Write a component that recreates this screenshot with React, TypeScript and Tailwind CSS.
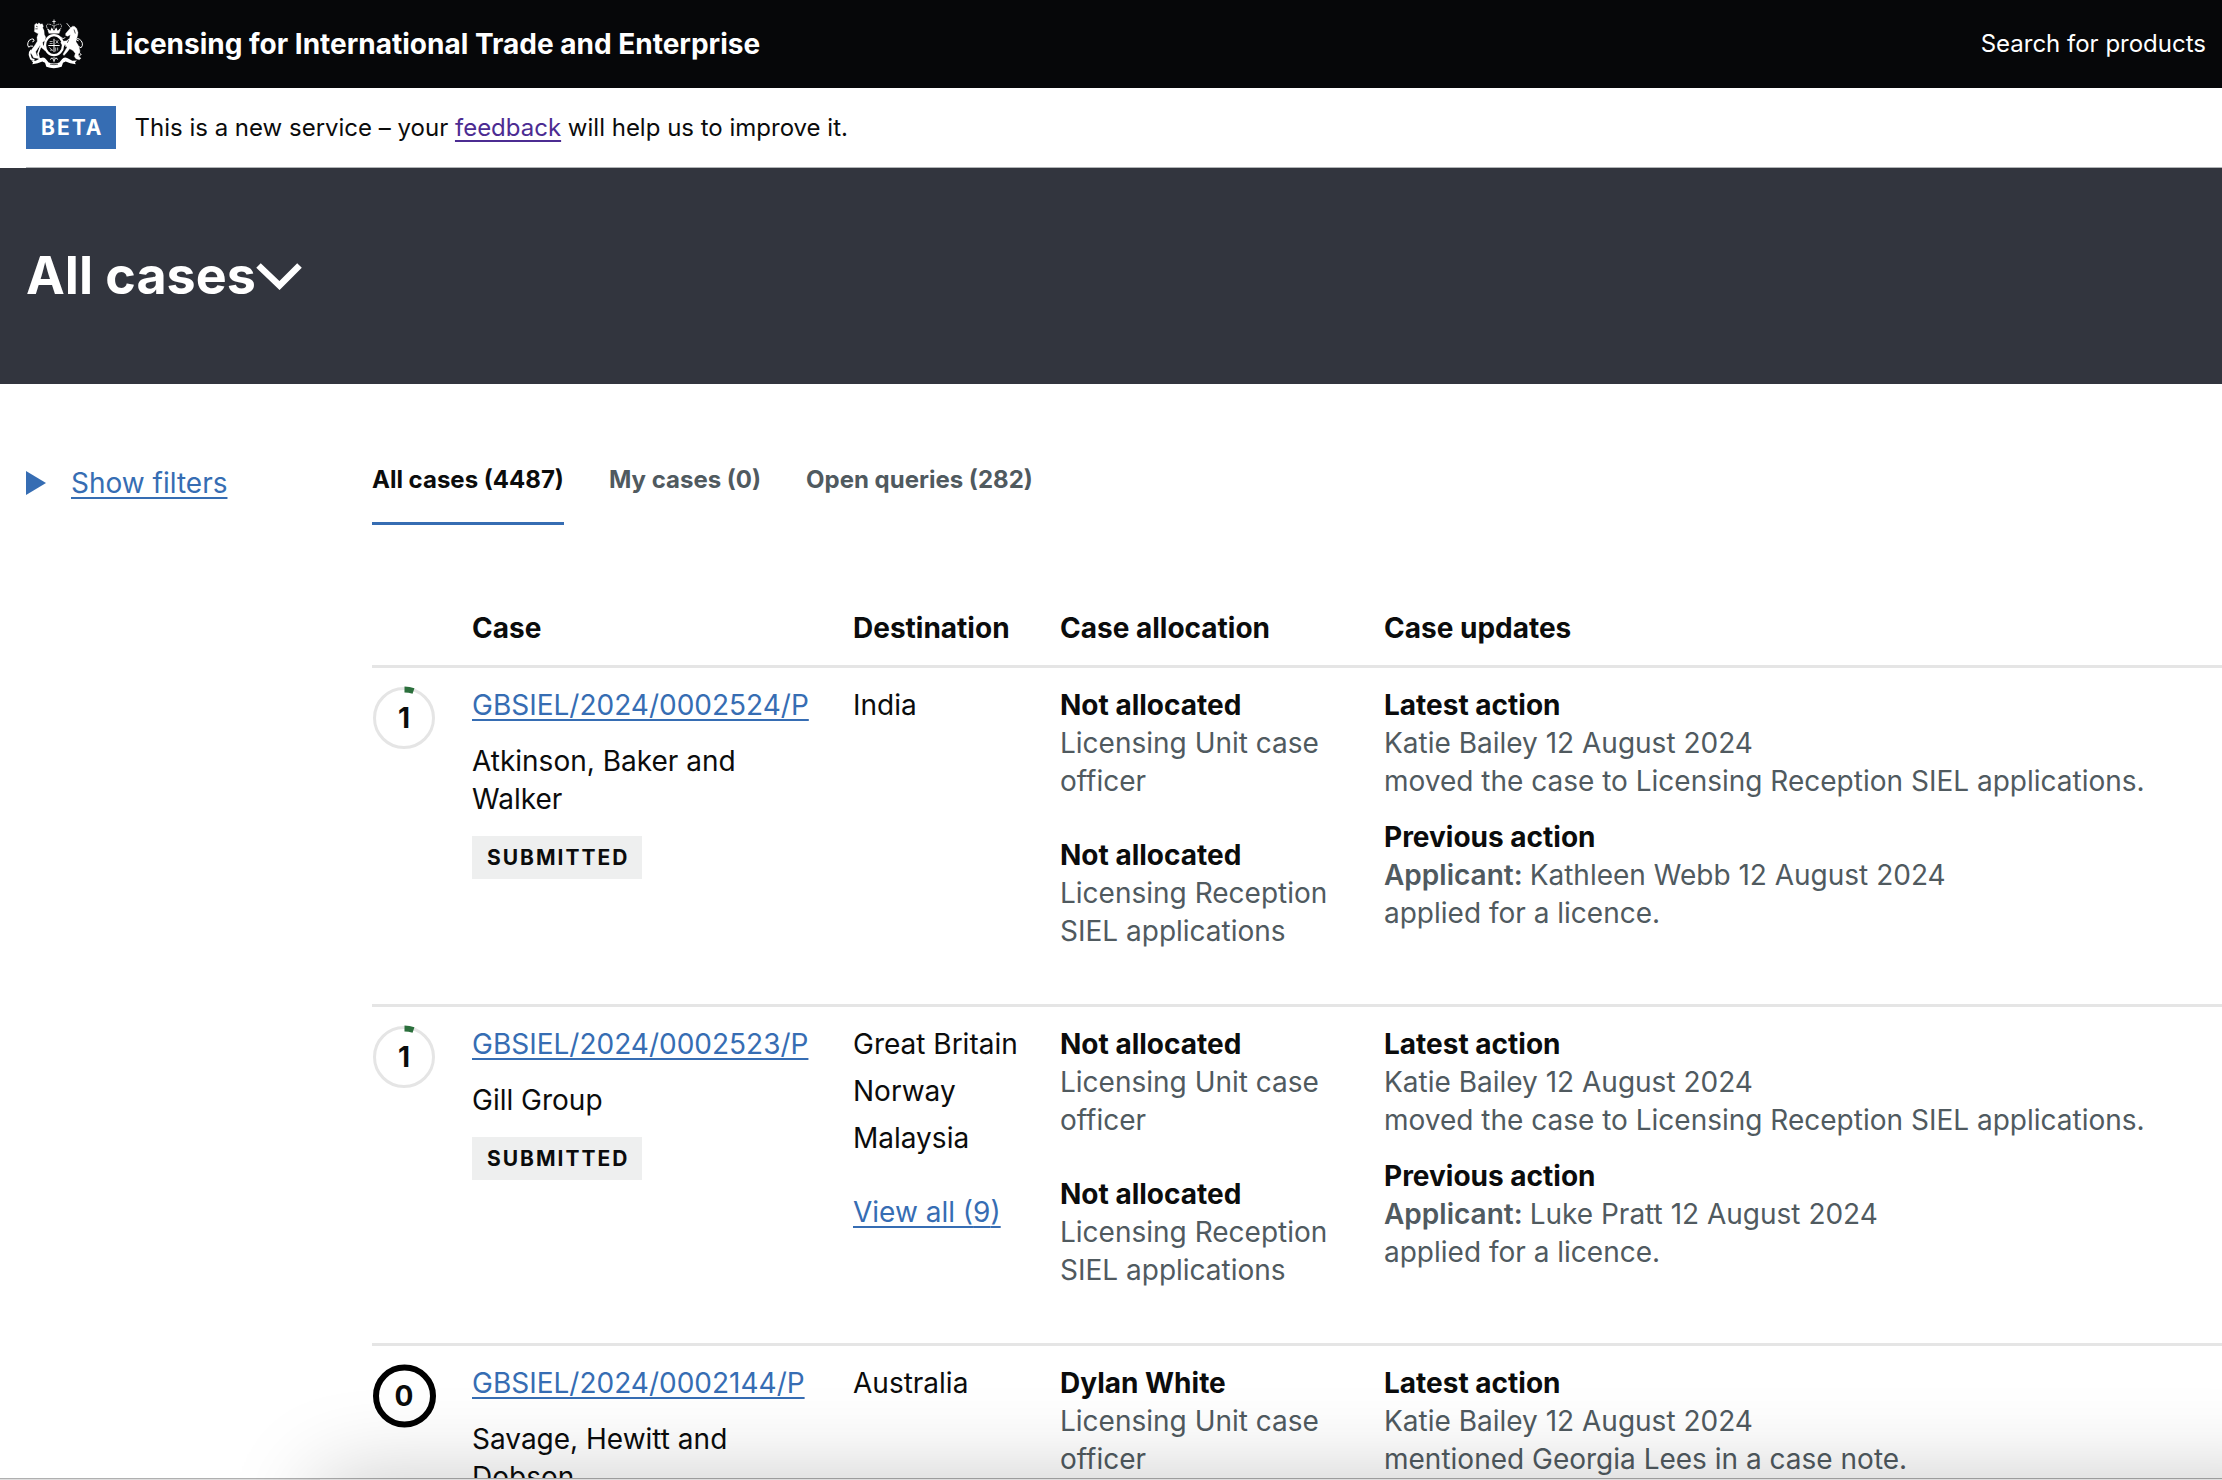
import React from "react";

type Allocation = { name: string; queue: string };
type Action = { title: string; applicant?: boolean; who: string; text: string };
type CaseRow = {
  days: number;
  reference: string;
  company: string;
  status: string;
  destinations: string[];
  more?: number;
  allocations: Allocation[];
  actions: Action[];
};

const rows: CaseRow[] = [
  {
    days: 1,
    reference: "GBSIEL/2024/0002524/P",
    company: "Atkinson, Baker and Walker",
    status: "Submitted",
    destinations: ["India"],
    allocations: [
      { name: "Not allocated", queue: "Licensing Unit case officer" },
      { name: "Not allocated", queue: "Licensing Reception SIEL applications" },
    ],
    actions: [
      {
        title: "Latest action",
        who: "Katie Bailey 12 August 2024",
        text: "moved the case to Licensing Reception SIEL applications.",
      },
      {
        title: "Previous action",
        applicant: true,
        who: "Kathleen Webb 12 August 2024",
        text: "applied for a licence.",
      },
    ],
  },
  {
    days: 1,
    reference: "GBSIEL/2024/0002523/P",
    company: "Gill Group",
    status: "Submitted",
    destinations: ["Great Britain", "Norway", "Malaysia"],
    more: 9,
    allocations: [
      { name: "Not allocated", queue: "Licensing Unit case officer" },
      { name: "Not allocated", queue: "Licensing Reception SIEL applications" },
    ],
    actions: [
      {
        title: "Latest action",
        who: "Katie Bailey 12 August 2024",
        text: "moved the case to Licensing Reception SIEL applications.",
      },
      {
        title: "Previous action",
        applicant: true,
        who: "Luke Pratt 12 August 2024",
        text: "applied for a licence.",
      },
    ],
  },
  {
    days: 0,
    reference: "GBSIEL/2024/0002144/P",
    company: "Savage, Hewitt and Dobson",
    status: "Submitted",
    destinations: ["Australia"],
    allocations: [{ name: "Dylan White", queue: "Licensing Unit case officer" }],
    actions: [
      {
        title: "Latest action",
        who: "Katie Bailey 12 August 2024",
        text: "mentioned Georgia Lees in a case note.",
      },
    ],
  },
];

const tabs = [
  { label: "All cases (4487)", active: true },
  { label: "My cases (0)", active: false },
  { label: "Open queries (282)", active: false },
];

const linkClass = "text-[#366db3] underline decoration-2 underline-offset-4";

function Crest() {
  return (
    <svg viewBox="78 50 174 155" className="h-[52px] w-[58px] shrink-0" fill="none" stroke="#fff" aria-hidden="true">
      {/* crown */}
      <path d="M162 54v14M157 60h10" strokeWidth="2.5" />
      <path d="M140 76q-3-8 6-8 10 1 16 7 6-6 16-7 9 0 6 8l-5 14h-34z" strokeWidth="2" strokeDasharray="5 2" />
      <path d="M143 80l8 8 4-10 7 10 7-10 4 10 8-8-3 16h-32z" fill="#fff" stroke="none" />
      <path d="M162 70v12" strokeWidth="2" />
      {/* garter and shield */}
      <ellipse cx="162" cy="131" rx="27" ry="30" strokeWidth="7" />
      <path d="M162 112v40M145 132h34" strokeWidth="3" />
      <path d="M149 120h9M149 126h9M167 116l8 10M175 116l-8 10M148 138l10 9M150 146h8M167 138v12M173 138v9" strokeWidth="2" />
      {/* lion */}
      <path
        d="M104 70l5-5 4 3 4-4 4 4 6-1 3 7-2 5 4 8 1 12 4 8-2 10-7 5 1 8 8 12-2 5-11-9-4-6-6 8-7 11 3 10 6 5-1 5-14-2-5-9-4-6 3-10 9-12 8-13-1-12 4-10-6-3-6-4 1-7z"
        fill="#fff"
        stroke="#fff"
        strokeWidth="1"
      />
      <path d="M108 74l5 2M106 82l7 0" stroke="#070809" strokeWidth="2" />
      <path d="M99 134q-8-2-13 3 -5-6-2-14 2-8 10-10 7-3 8 3 1 4-5 5" strokeWidth="3" />
      <path d="M94 146q-6 6-5 14l4 12 10 4" strokeWidth="6" />
      <path d="M122 134l-8 22 3 14 9 4" strokeWidth="5" />
      {/* unicorn */}
      <path d="M200 65l14 17" strokeWidth="2.5" />
      <path
        d="M212 79l6-5 6 1 6 6 4 12-1 8-3 10-2 10 6 9 4 10 2 9-5 10 2 7 6 4-5 5-10-3-5-7 3-9-7-9-10-5-8 10-9 10-3-4 7-12 5-9-5-7-10-1-4-6 8-4 10-1 9-8 2-10-8 4-6-2 0-6z"
        fill="#fff"
        stroke="#fff"
        strokeWidth="1"
      />
      <path d="M222 84l4 12M206 116l-4 8" stroke="#070809" strokeWidth="2" />
      <path d="M229 136q8-3 14 3 6-6 4-14-2-8-9-12-7-4-8 0 0 5 6 5" strokeWidth="3" />
      <path d="M238 152l5 8M236 166l8-8M196 108l-8 4-4-6M190 126l8 10" strokeWidth="2.5" />
      {/* motto ribbon */}
      <path
        d="M93 177l14 1 14-8q12-5 17 3l8 10q16 6 32 0l8-10q6-8 17-3l14 8 14-1-6 5 2 6-16-3-14-5-8 4-4 12q-24 8-46 0l-4-12-8-4-14 5-16 3 2-6z"
        fill="#fff"
        stroke="none"
      />
      <path d="M150 188q12 3 24 0" stroke="#070809" strokeWidth="2" />
      <path d="M156 168l6 10 6-10M162 166v16M150 174l6-4M174 174l-6-4" strokeWidth="2.5" />
    </svg>
  );
}

function DaysCounter({ days }: { days: number }) {
  return (
    <div className="relative flex size-16 items-center justify-center">
      <svg viewBox="0 0 64 64" className="absolute inset-0 size-16" fill="none" aria-hidden="true">
        {days === 0 ? (
          <circle cx="32.500" cy="32" r="28.500" stroke="#000" strokeWidth="6" />
        ) : (
          <>
            <circle cx="32" cy="32" r="29.500" stroke="#e5e5e5" strokeWidth="3" />
            <path d="M32.500 3.500a29 29 0 0 1 9 1.500" stroke="#2b6f3c" strokeWidth="6" />
          </>
        )}
      </svg>
      <span className="relative text-[28px] leading-[38px] font-bold">{days}</span>
    </div>
  );
}

export default function App() {
  return (
    <div className="relative flex h-screen flex-col overflow-hidden bg-white font-['Inter',sans-serif] text-[#0b0c0c]">
      <header className="flex h-[88px] shrink-0 items-center bg-[#060709] pr-4 pl-[26px] text-white">
        <Crest />
        <a href="#home" className="ml-[26px] text-[28px] leading-[38px] font-bold">
          Licensing for International Trade and Enterprise
        </a>
        <a href="#search" className="ml-auto text-[24px] leading-[38px]">
          Search for products
        </a>
      </header>

      <div className="ml-[26px] flex h-20 shrink-0 items-center border-b border-[#b1b4b6]">
        <strong className="bg-[#366db3] pt-[7px] pr-[13px] pb-[6px] pl-[15px] text-[21px] leading-[30px] font-bold tracking-[2px] text-white uppercase">
          Beta
        </strong>
        <p className="ml-[18px] text-[24px] leading-[38px]">
          This is a new service – your{" "}
          <a href="#feedback" className="text-[#4c2c92] underline decoration-2 underline-offset-4">
            feedback
          </a>{" "}
          will help us to improve it.
        </p>
      </div>

      <div className="flex h-[216px] shrink-0 items-center bg-[#32353e] pl-[26px] text-white">
        <button type="button" className="flex items-center text-[52px] leading-[60px] font-bold">
          <h1>All cases</h1>
          <svg viewBox="0 0 46 28" className="h-7 w-[46px]" fill="none" aria-hidden="true">
            <path d="M2.500 3.500L23.500 23.500L43.500 3.500" stroke="#fff" strokeWidth="6.500" />
          </svg>
        </button>
      </div>

      <main className="flex min-h-0 flex-1 overflow-hidden pl-[26px]">
        <aside className="w-[346px] shrink-0 pt-20">
          <button type="button" className="flex items-center text-[28px] leading-[38px] text-[#366db3]">
            <svg viewBox="0 0 20 24" className="mr-[25px] h-6 w-5" fill="#366db3" aria-hidden="true">
              <path d="M0 0L20 12L0 24z" />
            </svg>
            <span className="underline decoration-2 underline-offset-4">Show filters</span>
          </button>
        </aside>

        <section className="min-w-0 flex-1 pt-[77px]">
          <nav className="flex gap-[45px] text-[24px] leading-[38px] font-bold">
            {tabs.map((tab) => (
              <a
                key={tab.label}
                href="#tab"
                className={
                  tab.active
                    ? "border-b-3 border-[#366db3] pb-[23px]"
                    : "border-b-3 border-transparent pb-[23px] text-[#505a5f]"
                }
              >
                {tab.label}
              </a>
            ))}
          </nav>

          <table className="mt-[66px] w-full table-fixed border-collapse text-left align-top text-[28px] leading-[38px]">
            <colgroup>
              <col className="w-[100px]" />
              <col className="w-[381px]" />
              <col className="w-[207px]" />
              <col className="w-[324px]" />
              <col />
            </colgroup>
            <thead>
              <tr className="border-b-3 border-[#e5e5e5]">
                <td />
                <th scope="col" className="pt-[18px] pb-[18px] font-bold">Case</th>
                <th scope="col" className="font-bold">Destination</th>
                <th scope="col" className="font-bold">Case allocation</th>
                <th scope="col" className="font-bold">Case updates</th>
              </tr>
            </thead>
            <tbody>
              {rows.map((row) => (
                <tr key={row.reference} className="border-b-3 border-[#e5e5e5] align-top">
                  <td className="pt-[18px]">
                    <DaysCounter days={row.days} />
                  </td>
                  <td className="py-[18px] pr-9">
                    <a href="#case" className={linkClass}>
                      {row.reference}
                    </a>
                    <p className="mt-[18px]">{row.company}</p>
                    <strong className="mt-[18px] inline-block bg-[#eeefef] pt-[7px] pr-[13px] pb-[6px] pl-[15px] text-[21px] leading-[30px] font-bold tracking-[2px] uppercase">
                      {row.status}
                    </strong>
                  </td>
                  <td className="py-[18px]">
                    <ul className="flex flex-col gap-[9px]">
                      {row.destinations.map((place) => (
                        <li key={place}>{place}</li>
                      ))}
                    </ul>
                    {row.more && (
                      <a href="#destinations" className={`mt-9 inline-block ${linkClass}`}>
                        View all ({row.more})
                      </a>
                    )}
                  </td>
                  <td className="py-[18px] pr-9">
                    {row.allocations.map((item) => (
                      <div key={item.queue} className="mb-9">
                        <p className="font-bold">{item.name}</p>
                        <p className="text-[#505a5f]">{item.queue}</p>
                      </div>
                    ))}
                  </td>
                  <td className="py-[18px]">
                    {row.actions.map((action) => (
                      <div key={action.title} className="mb-[18px]">
                        <p className="font-bold">{action.title}</p>
                        <p className="text-[#505a5f]">
                          {action.applicant && <b className="font-semibold">Applicant: </b>}
                          {action.who}
                        </p>
                        <p className="text-[#505a5f]">{action.text}</p>
                      </div>
                    ))}
                  </td>
                </tr>
              ))}
            </tbody>
          </table>
        </section>
      </main>

      <div className="relative h-[2px] shrink-0 border-t border-black/20 bg-[#dddddd]">
        <div className="absolute top-0 -right-24 left-[320px] h-24 shadow-[0_0_90px_rgba(0,0,0,0.22)]" />
      </div>
    </div>
  );
}
